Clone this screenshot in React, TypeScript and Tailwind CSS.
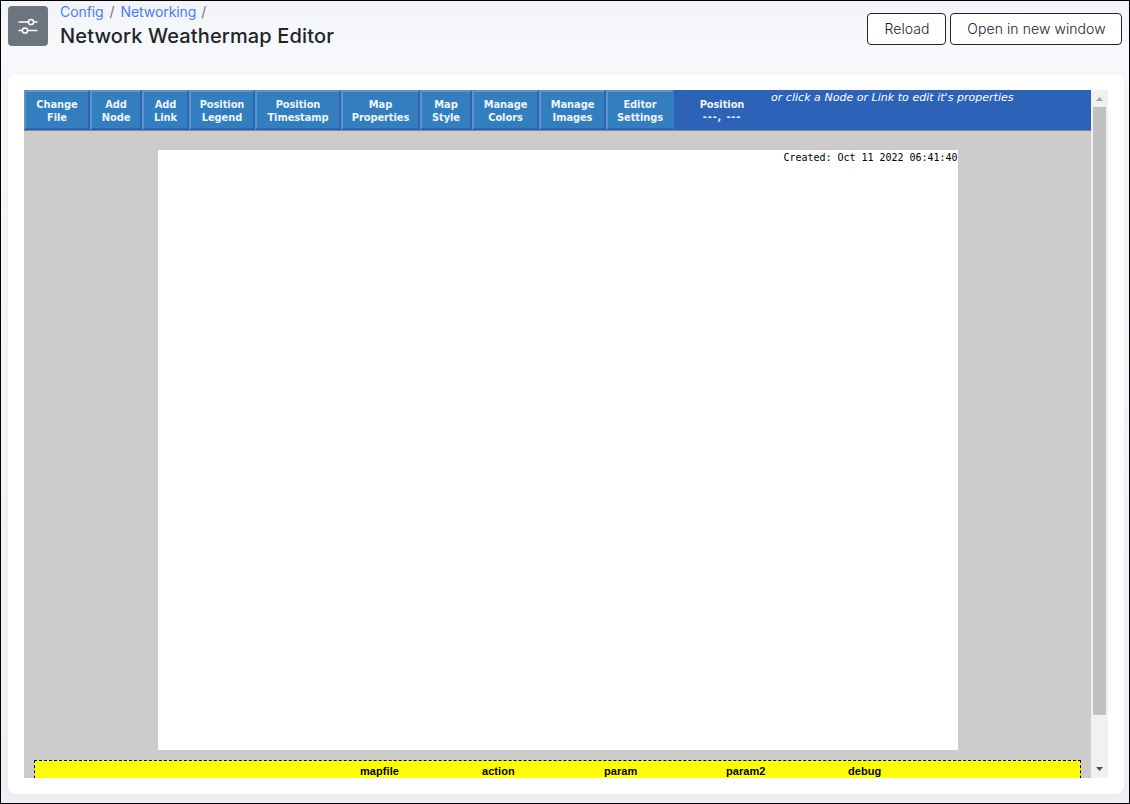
import React from "react";

const tools: { lines: [string, string]; width: string }[] = [
  { lines: ["Change", "File"], width: "w-[66px]" },
  { lines: ["Add", "Node"], width: "w-[52px]" },
  { lines: ["Add", "Link"], width: "w-[47px]" },
  { lines: ["Position", "Legend"], width: "w-[66px]" },
  { lines: ["Position", "Timestamp"], width: "w-[86px]" },
  { lines: ["Map", "Properties"], width: "w-[79px]" },
  { lines: ["Map", "Style"], width: "w-[52px]" },
  { lines: ["Manage", "Colors"], width: "w-[67px]" },
  { lines: ["Manage", "Images"], width: "w-[67px]" },
  { lines: ["Editor", "Settings"], width: "w-[68px] last-of-type:border-r-[#337ebf]" },
];

const fields = ["mapfile", "action", "param", "param2", "debug"];

function SlidersIcon() {
  return (
    <svg width="20" height="16" viewBox="0 0 20 16" fill="none" stroke="#fff" strokeWidth="1.5">
      <path d="M0.5 4H10.3M15.7 4H19.5M0.5 12.5H4.3M9.7 12.5H19.5" />
      <circle cx="13" cy="4" r="2.6" />
      <circle cx="7" cy="12.5" r="2.6" />
    </svg>
  );
}

function Header() {
  return (
    <header className="flex h-[73px] shrink-0 items-start pl-[7px] pr-[7px]">
      <div className="mt-[5px] flex h-10 w-10 items-center justify-center rounded bg-[#6c757d]">
        <SlidersIcon />
      </div>
      <div className="ml-3 flex-1">
        <nav className="mt-[2px] flex h-[18px] items-center gap-[6px] text-[14px] leading-[18px] tracking-[-0.08px] text-[#4a7bf7]">
          <a>Config</a>
          <span className="text-[#6c757d]">/</span>
          <a>Networking</a>
          <span className="-ml-px text-[#6c757d]">/</span>
        </nav>
        <h1 className="mt-[3px] text-[20px] font-medium leading-6 tracking-[0.14px] text-[#212529]">Network Weathermap Editor</h1>
      </div>
      <div className="mt-3 flex gap-1 text-[14px] font-light text-[#212529]">
        <button className="h-8 w-[79px] rounded border border-[#212529] bg-white pb-0.5 pl-px tracking-[0.08px]">Reload</button>
        <button className="h-8 w-[172px] rounded border border-[#212529] bg-white pb-0.5 pl-px tracking-[0.08px]">Open in new window</button>
      </div>
    </header>
  );
}

function Toolbar() {
  return (
    <div className="flex h-[41px] shrink-0 border-b border-[#888] bg-[#2c63b8] font-['DejaVu_Sans_Condensed','DejaVu_Sans',sans-serif] text-[11px] leading-[13px] text-white">
      {tools.map((t) => (
        <button
          key={t.lines.join(" ")}
          className={`${t.width} flex h-10 shrink-0 flex-col items-center justify-center border-2 border-t-[#5a95c6] border-r-[#2c63b8] border-b-[#2c63b8] border-l-[#5a95c6] bg-[#337ebf] pt-[2px] font-bold tracking-[-0.08px] text-[#eef4fb]`}
        >
          <span>{t.lines[0]}</span>
          <span>{t.lines[1]}</span>
        </button>
      ))}
      <div className="mt-2 w-[96px] shrink-0 text-center font-bold text-[#eef4fb]">
        <div className="tracking-[-0.08px]">Position</div>
        <div className="-mt-px tracking-[0.8px]">---, ---</div>
      </div>
      <div className="ml-[1px] mt-px whitespace-nowrap font-['DejaVu_Sans',sans-serif] italic tracking-[0.03px] text-white">or click a Node or Link to edit it's properties</div>
    </div>
  );
}

function ScrollBar() {
  return (
    <div className="flex w-[17px] shrink-0 flex-col items-center bg-[#f1f1f1]">
      <div className="flex h-[17px] items-center pt-px">
        <svg width="7" height="4" viewBox="0 0 7 4"><path d="M0 4L3.5 0L7 4Z" fill="#a3a3a3" /></svg>
      </div>
      <div className="h-[608px] w-[13px] bg-[#c1c1c1]" />
      <div className="mt-auto flex h-[17px] items-center pb-0.5">
        <svg width="7" height="4" viewBox="0 0 7 4"><path d="M0 0L3.5 4L7 0Z" fill="#505050" /></svg>
      </div>
    </div>
  );
}

export default function App() {
  return (
    <div className="flex h-[804px] w-[1130px] flex-col overflow-hidden border border-black bg-linear-to-b from-[#f3f4f9] via-[#f7f8fc] via-5% to-[#eff0f5] font-['Inter',sans-serif]">
      <Header />
      <main className="ml-[7px] flex h-[720px] w-[1116px] shrink-0 rounded-lg bg-white p-4 shadow-[0_2px_6px_rgba(40,50,80,0.04)]">
        <div className="flex h-[688px] w-[1067px] flex-col overflow-hidden bg-[#ccc]">
          <Toolbar />
          <div className="ml-[134px] mt-[19px] flex h-[600px] w-[800px] shrink-0 justify-end bg-white">
            <span className="whitespace-pre pr-[0.5px] pt-px font-['DejaVu_Sans_Mono',monospace] text-[10px] leading-[14px] tracking-[-0.02px] text-black">
              Created: Oct 11 2022 06:41:40
            </span>
          </div>
          <div className="ml-[10px] mt-[10px] flex h-[60px] w-[1047px] shrink-0 border border-dashed border-black bg-[#ff0] pl-[325px] pt-[2px] font-['Liberation_Sans',sans-serif] text-[11px] font-bold leading-4 text-black">
            {fields.map((f) => (
              <span key={f} className="w-[122px] tracking-[0.06px]">{f}</span>
            ))}
          </div>
        </div>
        <ScrollBar />
      </main>
    </div>
  );
}
